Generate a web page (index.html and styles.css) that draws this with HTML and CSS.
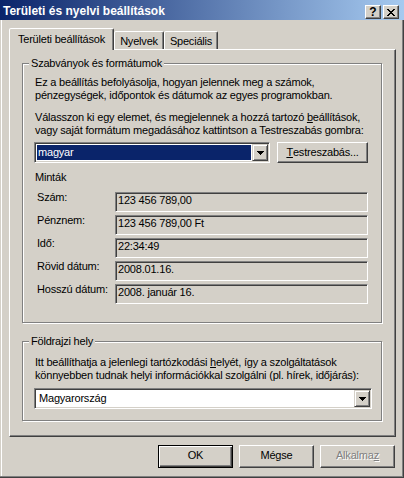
FILE: index.html
```html
<!DOCTYPE html>
<html lang="hu">
<head>
<meta charset="utf-8">
<title>Területi és nyelvi beállítások</title>
<link rel="stylesheet" href="styles.css">
</head>
<body>
<div class="window">
  <div class="titlebar">
    <span class="title">Területi és nyelvi beállítások</span>
    <div class="tbtns">
      <span class="tbtn help">?</span>
      <span class="tbtn close"><svg width="8" height="7" viewBox="0 0 8 7" shape-rendering="crispEdges"><path d="M0 0h2v1H0zM6 0h2v1H6zM1 1h2v1H1zM5 1h2v1H5zM2 2h4v1H2zM3 3h2v1H3zM2 4h4v1H2zM1 5h2v1H1zM5 5h2v1H5zM0 6h2v1H0zM6 6h2v1H6z" fill="#000"/></svg></span>
    </div>
  </div>

  <div class="tabs">
    <div class="tab active">Területi beállítások</div>
    <div class="tab t2">Nyelvek</div>
    <div class="tab t3">Speciális</div>
  </div>

  <div class="panel">
    <div class="group g1">
      <span class="legend">Szabványok és formátumok</span>
      <p class="para p1">Ez a beállítás befolyásolja, hogyan jelennek meg a számok,<br>pénzegységek, időpontok és dátumok az egyes programokban.</p>
      <p class="para p2">Válasszon ki egy elemet, és megjelennek a hozzá tartozó <u>b</u>eállítások,<br>vagy saját formátum megadásához kattintson a Testreszabás gombra:</p>
      <div class="selrow">
        <div class="combo c1">
          <div class="cval sel">magyar</div>
          <div class="dd"><svg width="7" height="4" viewBox="0 0 7 4" shape-rendering="crispEdges"><path d="M0 0h7v1H6v1H5v1H4v1H3V3H2V2H1V1H0z" fill="#000"/></svg></div>
        </div>
        <div class="btn custom"><u>T</u>estreszabás...</div>
      </div>
      <div class="stitle">Minták</div>
      <div class="samples">
        <div class="srow"><span class="slabel">Szám:</span><div class="field">123 456 789,00</div></div>
        <div class="srow"><span class="slabel">Pénznem:</span><div class="field">123 456 789,00 Ft</div></div>
        <div class="srow"><span class="slabel">Idő:</span><div class="field">22:34:49</div></div>
        <div class="srow"><span class="slabel">Rövid dátum:</span><div class="field">2008.01.16.</div></div>
        <div class="srow"><span class="slabel">Hosszú dátum:</span><div class="field">2008. január 16.</div></div>
      </div>
    </div>

    <div class="group g2">
      <span class="legend">Földrajzi hely</span>
      <p class="para">Itt beállíthatja a jelenlegi tartózkodási <u>h</u>elyét, így a szolgáltatások<br>könnyebben tudnak helyi információkkal szolgálni (pl. hírek, időjárás):</p>
      <div class="combo c2">
        <div class="cval">Magyarország</div>
        <div class="dd"><svg width="7" height="4" viewBox="0 0 7 4" shape-rendering="crispEdges"><path d="M0 0h7v1H6v1H5v1H4v1H3V3H2V2H1V1H0z" fill="#000"/></svg></div>
      </div>
    </div>
  </div>

  <div class="actions">
    <div class="btn action default">OK</div>
    <div class="btn action">Mégse</div>
    <div class="btn action disabled">Alkalma<u>z</u></div>
  </div>
</div>
</body>
</html>
```

FILE: styles.css
```css
html, body {
  margin: 0;
  padding: 0;
  background: #d4d0c8;
}

.window {
  width: 404px;
  height: 478px;
  box-sizing: border-box;
  background: #d4d0c8;
  color: #000;
  font-family: "Liberation Sans", Arial, sans-serif;
  font-size: 11px;
  line-height: 13px;
  letter-spacing: -0.2px;
  display: flex;
  flex-direction: column;
  overflow: hidden;
  box-shadow: inset -1px -1px #404040, inset -2px -2px #808080, inset 1px 0 #d4d0c8, inset 2px 0 #fff;
}

/* title bar */
.titlebar {
  height: 20px;
  flex: none;
  display: flex;
  align-items: flex-start;
  background: linear-gradient(to right, #0a246a 0%, #a6caf0 100%);
}

.title {
  color: #fff;
  font-weight: bold;
  font-size: 12px;
  line-height: 14px;
  letter-spacing: 0;
  margin: 4px 0 0 3px;
  white-space: nowrap;
}

.tbtns {
  margin: 5px 5px 0 auto;
  display: flex;
  gap: 2px;
}

.tbtn {
  width: 16px;
  height: 14px;
  box-sizing: border-box;
  background: #d4d0c8;
  border: 1px solid;
  border-color: #fff #404040 #404040 #fff;
  box-shadow: inset -1px -1px #808080;
  display: flex;
  align-items: center;
  justify-content: center;
}

.tbtn.help {
  font-weight: bold;
  font-size: 12px;
  line-height: 12px;
  letter-spacing: 0;
  padding-bottom: 1px;
}

.tbtn svg {
  display: block;
}

/* tabs */
.tabs {
  flex: none;
  display: flex;
  align-items: flex-end;
  height: 21px;
  margin: 8px 0 0 9px;
}

.tab {
  box-sizing: border-box;
  background: #d4d0c8;
  border: 1px solid;
  border-bottom: none;
  border-color: #fff #404040 transparent #fff;
  border-radius: 2px 2px 0 0;
  box-shadow: inset -1px 0 #808080;
  text-align: center;
  white-space: nowrap;
  height: 18px;
  padding-top: 3px;
}

.tab.active {
  width: 105px;
  height: 22px;
  padding-top: 4px;
  align-self: flex-start;
  position: relative;
  z-index: 1;
}

.tab.t2 {
  width: 50px;
}

.tab.t3 {
  width: 54px;
}

/* panel */
.panel {
  flex: none;
  margin-left: 9px;
  width: 387px;
  height: 388px;
  box-sizing: border-box;
  border: 1px solid;
  border-color: #fff #404040 #404040 #fff;
  box-shadow: inset -1px -1px #808080;
  padding: 13px 0 0 12px;
}

.group {
  position: relative;
  box-sizing: border-box;
  width: 360px;
  border: 1px solid #808080;
  box-shadow: inset 1px 1px #fff, 1px 1px #fff;
}

.g1 {
  height: 260px;
  padding: 12px 0 0 11px;
}

.g2 {
  height: 80px;
  margin-top: 18px;
  padding: 14px 0 0 11px;
}

.legend {
  position: absolute;
  left: 6px;
  top: -7px;
  padding: 0 2px;
  background: #d4d0c8;
  white-space: nowrap;
}

.para {
  margin: 0;
  padding-left: 1px;
  white-space: nowrap;
}

.p2 {
  margin-top: 9px;
}

.selrow {
  display: flex;
  gap: 7px;
  height: 21px;
  margin-top: 5px;
}

/* combo boxes */
.combo {
  box-sizing: border-box;
  height: 21px;
  background: #fff;
  border: 1px solid;
  border-color: #808080 #fff #fff #808080;
  box-shadow: inset 1px 1px #404040, inset -1px -1px #d4d0c8;
  padding: 1px;
  display: flex;
}

.c1 {
  width: 236px;
}

.c2 {
  width: 338px;
  margin-top: 6px;
}

.cval {
  flex: 1;
  white-space: nowrap;
  padding: 2px 0 0 3px;
}

.cval.sel {
  margin: 1px;
  padding: 1px 0 0 1px;
  background: #0a246a;
  color: #fff;
}

.dd {
  width: 16px;
  height: 17px;
  box-sizing: border-box;
  background: #d4d0c8;
  border: 1px solid;
  border-color: #d4d0c8 #404040 #404040 #d4d0c8;
  box-shadow: inset 1px 1px #fff, inset -1px -1px #808080;
  display: flex;
  align-items: center;
  justify-content: center;
}

.dd svg {
  display: block;
}

/* buttons */
.btn {
  box-sizing: border-box;
  background: #d4d0c8;
  border: 1px solid;
  border-color: #fff #404040 #404040 #fff;
  box-shadow: inset -1px -1px #808080;
  display: flex;
  align-items: center;
  justify-content: center;
  white-space: nowrap;
}

.btn.custom {
  width: 91px;
  height: 21px;
}

.stitle {
  margin-top: 8px;
  padding-left: 1px;
}

.samples {
  margin-top: 8px;
  display: flex;
  flex-direction: column;
  gap: 3px;
}

.srow {
  display: flex;
  height: 20px;
}

.slabel {
  width: 81px;
  box-sizing: border-box;
  padding-left: 3px;
  margin-top: -1px;
  white-space: nowrap;
}

.field {
  width: 253px;
  height: 20px;
  box-sizing: border-box;
  border: 1px solid;
  border-color: #808080 #fff #fff #808080;
  box-shadow: inset 1px 1px #404040, inset -1px -1px #d4d0c8;
  padding: 1px 0 0 2px;
  white-space: nowrap;
}

/* dialog buttons */
.actions {
  flex: none;
  display: flex;
  justify-content: flex-end;
  gap: 6px;
  margin-top: 8px;
  padding-right: 9px;
}

.btn.action {
  width: 75px;
  height: 23px;
  padding-bottom: 2px;
}

.btn.default {
  border-color: #000;
  box-shadow: inset 1px 1px #fff, inset -1px -1px #404040, inset -2px -2px #808080;
}

.btn.disabled {
  color: #808080;
  text-shadow: 1px 1px 0 #fff;
}
```
